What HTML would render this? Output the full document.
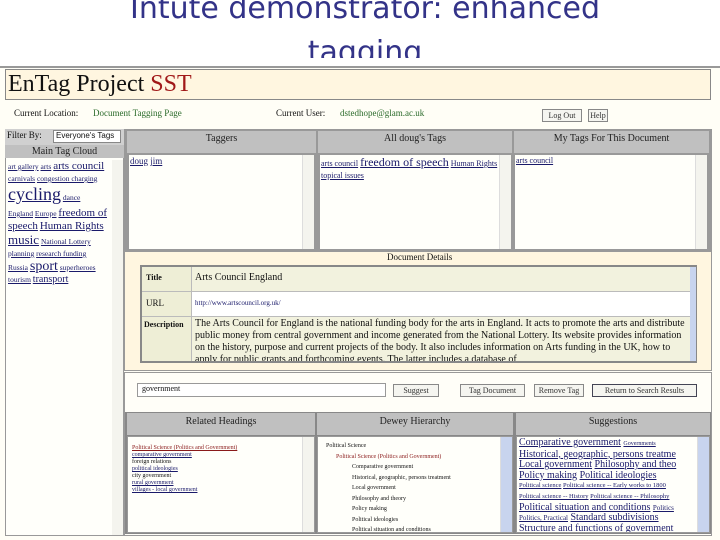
<!DOCTYPE html>
<html><head><meta charset="utf-8"><style>
*{margin:0;padding:0;box-sizing:border-box}
body{width:720px;height:540px;overflow:hidden;background:#fff;position:relative;font-family:"Liberation Serif",serif;color:#111}
.a{position:absolute}
.t{position:absolute;left:0;width:730px;text-align:center;font-family:"DejaVu Sans",sans-serif;font-size:30px;color:#333388;line-height:36px}
a,u{color:#1a1a6a;text-decoration:underline}
.hd{background:#c0c0c0;text-align:center;font-size:10px;color:#222}
.box{background:#fffffa;border:1px solid #999}
.sb{position:absolute;right:0;top:0;bottom:0;width:12px;background:#f4f4ee;border-left:1px solid #ddd}
.btn{position:absolute;height:13px;border:1px solid #888;background:#f5f5f0;font-size:8px;text-align:center;line-height:11px;color:#333}
.l{white-space:nowrap}
</style></head><body>
<div class="t" style="top:-9px">Intute demonstrator: enhanced</div>
<div class="a" style="top:30px;left:0;width:730px;height:28px;overflow:hidden"><div class="t" style="top:5px">tagging</div></div>
<div class="a" style="left:0;top:66px;width:720px;height:474px;background:#fffef6;border-top:2px solid #999"></div>
<div class="a" style="left:5px;top:69px;width:706px;height:31px;background:#fff6e0;border:1px solid #888"></div>
<div class="a" style="left:8px;top:70px;font-size:24px;line-height:28px">EnTag Project <span style="color:#a01818">SST</span></div>
<div class="a" style="left:14px;top:108px;font-size:9px">Current Location:</div>
<div class="a" style="left:93px;top:108px;font-size:9px;color:#2a6a2a">Document Tagging Page</div>
<div class="a" style="left:276px;top:108px;font-size:9px">Current User:</div>
<div class="a" style="left:340px;top:108px;font-size:9px;color:#2a6a2a">dstedhope@glam.ac.uk</div>
<div class="btn" style="left:542px;top:109px;width:40px">Log Out</div>
<div class="btn" style="left:588px;top:109px;width:20px">Help</div>
<div class="a" style="left:5px;top:129px;width:119px;height:407px;background:#fffffa;border:1px solid #999"></div>
<div class="a" style="left:5px;top:129px;width:119px;height:16px;background:#d0d0d0;font-size:9px;padding:1px 2px">Filter By:</div>
<div class="a" style="left:53px;top:130px;width:68px;height:13px;background:#fff;border:1px solid #888;font-size:8px;padding-left:2px;font-family:'Liberation Sans',sans-serif">Everyone's Tags</div>
<div class="a hd" style="left:5px;top:145px;width:119px;height:13px;line-height:13px;font-size:10px">Main Tag Cloud</div>
<div class="a" style="left:8px;top:160px;width:106px;font-size:7.5px;line-height:12px">
<div class="l"><a>art gallery</a> <a>arts</a> <a style="font-size:11px">arts council</a></div>
<div class="l"><a>carnivals</a> <a>congestion charging</a></div>
<div class="l" style="line-height:18px"><a style="font-size:18px">cycling</a> <a>dance</a></div>
<div class="l"><a>England</a> <a>Europe</a> <a style="font-size:11px">freedom of</a></div>
<div class="l"><a style="font-size:11px">speech</a> <a style="font-size:11px">Human Rights</a></div>
<div class="l" style="line-height:13px"><a style="font-size:13px">music</a> <a>National Lottery</a></div>
<div class="l"><a>planning</a> <a>research funding</a></div>
<div class="l" style="line-height:13px"><a>Russia</a> <a style="font-size:14px">sport</a> <a>superheroes</a></div>
<div class="l"><a>tourism</a> <a style="font-size:10px">transport</a></div></div>
<div class="a" style="left:112px;top:160px;width:11px;height:375px;background:#f4f4ee"></div>
<div class="a" style="left:124px;top:129px;width:588px;height:122px;background:#999"></div>
<div class="a hd" style="left:127px;top:131px;width:189px;height:22px;line-height:16px">Taggers</div>
<div class="a hd" style="left:318px;top:131px;width:194px;height:22px;line-height:16px">All doug's Tags</div>
<div class="a hd" style="left:514px;top:131px;width:195px;height:22px;line-height:16px">My Tags For This Document</div>
<div class="a box" style="left:128px;top:154px;width:187px;height:96px;font-size:9px;padding:1px"><a>doug</a> <a>jim</a><div class="sb"></div></div>
<div class="a box" style="left:319px;top:154px;width:193px;height:96px;font-size:8px;padding:1px;line-height:12px"><a>arts council</a> <a style="font-size:12px">freedom of speech</a> <a>Human Rights</a> <a>topical issues</a><div class="sb"></div></div>
<div class="a box" style="left:514px;top:154px;width:194px;height:96px;font-size:8px;padding:1px"><a>arts council</a><div class="sb"></div></div>
<div class="a" style="left:124px;top:251px;width:588px;height:120px;background:#fff6e0;border:1px solid #999"></div>
<div class="a" style="left:387px;top:252px;font-size:9px">Document Details</div>
<div class="a" style="left:140px;top:265px;width:557px;height:98px;border:2px solid #888;background:#fff"></div>
<div class="a" style="left:142px;top:267px;width:548px;height:25px;background:#f2f2de;border-bottom:1px solid #ccc"></div>
<div class="a" style="left:142px;top:316px;width:548px;height:45px;background:#f2f2de"></div>
<div class="a" style="left:142px;top:267px;width:50px;height:94px;background:#eeeed6;border-right:1px solid #bbb"></div>
<div class="a" style="left:142px;top:291px;width:548px;border-top:1px solid #bbb"></div>
<div class="a" style="left:142px;top:316px;width:548px;border-top:1px solid #bbb"></div>
<div class="a" style="left:146px;top:273px;font-size:8px;font-weight:bold">Title</div>
<div class="a" style="left:195px;top:272px;font-size:10px">Arts Council England</div>
<div class="a" style="left:146px;top:298px;font-size:9px">URL</div>
<div class="a" style="left:195px;top:299px;font-size:7px;color:#1a1a6a">http://www.artscouncil.org.uk/</div>
<div class="a" style="left:144px;top:320px;font-size:8px;font-weight:bold">Description</div>
<div class="a" style="left:195px;top:318px;width:495px;height:43px;overflow:hidden;font-size:10px;line-height:12px">The Arts Council for England is the national funding body for the arts in England. It acts to promote the arts and distribute public money from central government and income generated from the National Lottery. Its website provides information on the history, purpose and current projects of the body. It also includes information on Arts funding in the UK, how to apply for public grants and forthcoming events. The latter includes a database of</div>
<div class="a" style="left:690px;top:267px;width:6px;height:94px;background:#c8d4ee"></div>
<div class="a" style="left:124px;top:372px;width:588px;height:164px;background:#fffef8;border:1px solid #999"></div>
<div class="a" style="left:137px;top:383px;width:249px;height:14px;background:#fff;border:1px solid #999;font-size:8px;padding-left:4px">government</div>
<div class="btn" style="left:393px;top:384px;width:46px">Suggest</div>
<div class="btn" style="left:460px;top:384px;width:65px">Tag Document</div>
<div class="btn" style="left:534px;top:384px;width:50px">Remove Tag</div>
<div class="btn" style="left:592px;top:384px;width:105px;border-color:#445">Return to Search Results</div>
<div class="a" style="left:125px;top:412px;width:586px;height:122px;background:#888"></div>
<div class="a hd" style="left:127px;top:413px;width:188px;height:22px;line-height:18px;font-size:10px">Related Headings</div>
<div class="a hd" style="left:317px;top:413px;width:196px;height:22px;line-height:18px;font-size:10px">Dewey Hierarchy</div>
<div class="a hd" style="left:516px;top:413px;width:194px;height:22px;line-height:18px;font-size:10px">Suggestions</div>
<div class="a box" style="left:127px;top:436px;width:188px;height:97px;font-size:6px;line-height:7px;padding:8px 4px"><a style="color:#8a1a1a">Political Science (Politics and Government)</a><br><a>comparative government</a><br>foreign relations<br><a>political ideologies</a><br>city government<br><a>rural government</a><br><a>villages - local government</a><div class="sb"></div></div>
<div class="a box" style="left:317px;top:436px;width:196px;height:97px;font-size:6px;line-height:10.5px;padding:4px 0 0 8px;overflow:hidden">Political Science<br><span style="margin-left:10px;color:#8a1a1a">Political Science (Politics and Government)</span><br><span style="margin-left:26px">Comparative government</span><br><span style="margin-left:26px">Historical, geographic, persons treatment</span><br><span style="margin-left:26px">Local government</span><br><span style="margin-left:26px">Philosophy and theory</span><br><span style="margin-left:26px">Policy making</span><br><span style="margin-left:26px">Political ideologies</span><br><span style="margin-left:26px">Political situation and conditions</span><div class="sb" style="background:#c8d4ee"></div></div>
<div class="a box" style="left:516px;top:436px;width:194px;height:97px;font-size:10px;line-height:10.6px;padding:1px 2px;overflow:hidden">
<div class="l"><a>Comparative government</a> <a style="font-size:6px">Governments</a></div>
<div class="l"><a>Historical, geographic, persons treatme</a></div>
<div class="l"><a>Local government</a> <a>Philosophy and theo</a></div>
<div class="l"><a>Policy making</a> <a>Political ideologies</a></div>
<div class="l" style="font-size:6.5px"><a>Political science</a> <a>Political science -- Early works to 1800</a></div>
<div class="l" style="font-size:6.5px"><a>Political science -- History</a> <a>Political science -- Philosophy</a></div>
<div class="l"><a>Political situation and conditions</a> <a style="font-size:7px">Politics</a></div>
<div class="l"><a style="font-size:7px">Politics, Practical</a> <a>Standard subdivisions</a></div>
<div class="l"><a>Structure and functions of government</a></div>
<div class="sb" style="background:#c8d4ee"></div></div>
</body></html>
